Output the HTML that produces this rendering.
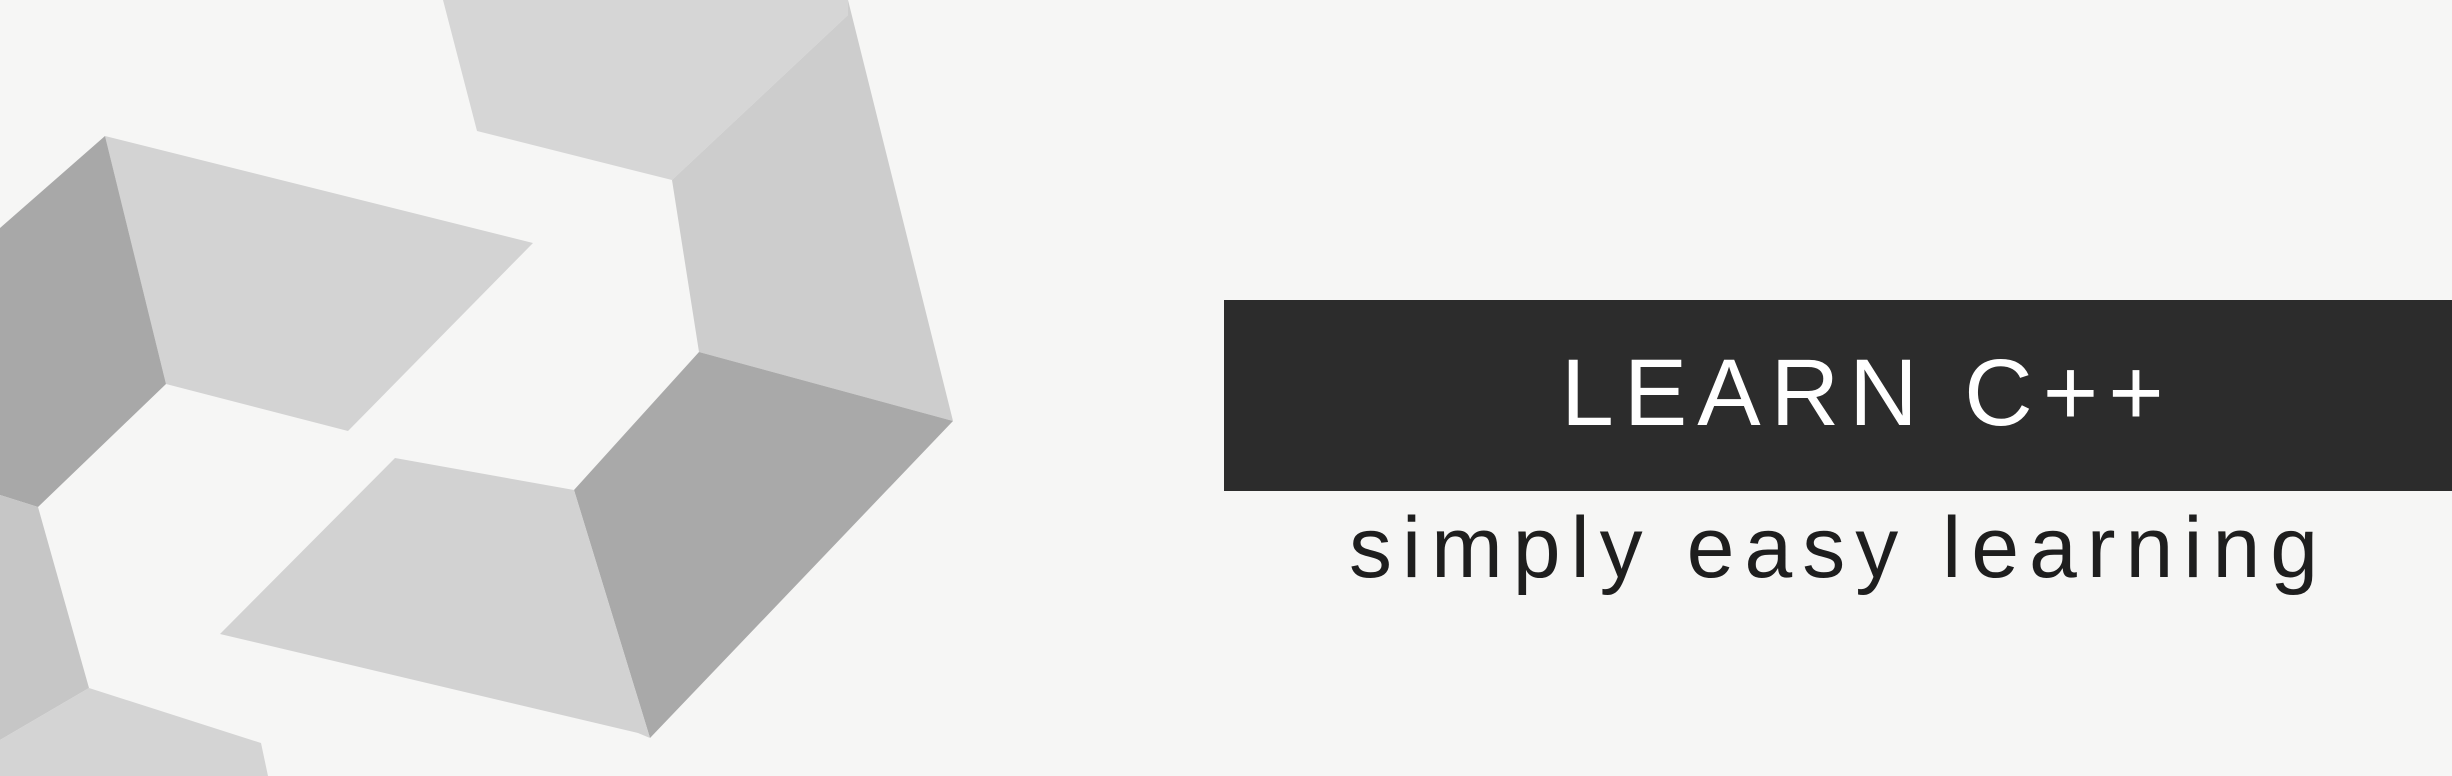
<!DOCTYPE html>
<html><head><meta charset="utf-8"><style>
html,body{margin:0;padding:0;}
body{width:2452px;height:776px;background:#f6f6f5;position:relative;overflow:hidden;font-family:"Liberation Sans",sans-serif;}
svg{position:absolute;left:0;top:0;}
.bar{position:absolute;left:1224px;top:300px;width:1228px;height:191px;background:#2c2c2c;}
.t1{position:absolute;left:1561px;top:343px;font-size:95px;line-height:100px;color:#fff;letter-spacing:10px;white-space:nowrap;}
.t2{position:absolute;left:1349px;top:503px;font-size:86px;line-height:90px;color:#1e1e1e;letter-spacing:10px;white-space:nowrap;}
</style></head><body>
<svg width="1000" height="776" viewBox="0 0 1000 776">
<polygon points="443,0 848,0 848,15 672,180 477,131" fill="#d6d6d6"/>
<polygon points="848,0 953,421 699,352 672,180 848,15" fill="#cdcdcd"/>
<polygon points="699,352 953,421 650,738 574,490" fill="#a9a9a9"/>
<polygon points="395,458 574,490 650,738 638,733 220,634" fill="#d2d2d2"/>
<polygon points="105,136 533,243 348,431 166,384" fill="#d3d3d3"/>
<polygon points="0,228 105,136 166,384 38,507 0,495" fill="#a8a8a8"/>
<polygon points="0,495 38,507 89,688 0,740" fill="#c6c6c6"/>
<polygon points="89,688 261,743 268,776 0,776 0,740" fill="#d4d4d4"/>
</svg>
<div class="bar"></div>
<div class="t1">LEARN C++</div>
<div class="t2">simply easy learning</div>
</body></html>
